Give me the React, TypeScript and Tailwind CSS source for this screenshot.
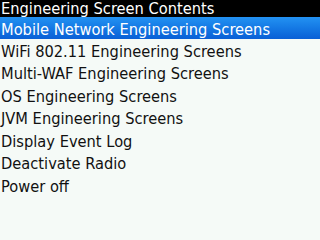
const items = [
  "Mobile Network Engineering Screens",
  "WiFi 802.11 Engineering Screens",
  "Multi-WAF Engineering Screens",
  "OS Engineering Screens",
  "JVM Engineering Screens",
  "Display Event Log",
  "Deactivate Radio",
  "Power off",
];

export default function App() {
  return (
    <div
      className="w-[320px] h-[240px] overflow-hidden bg-[#f5faf7] text-[16.3px]"
      style={{ fontFamily: '"DejaVu Sans Condensed", "DejaVu Sans", sans-serif' }}
    >
      {/* Title bar */}
      <div className="h-[17px] bg-black text-white leading-[18px] pl-[1px] whitespace-nowrap">
        Engineering Screen Contents
      </div>

      {/* Menu list */}
      <ul>
        {items.map((item, index) => (
          <li
            key={index}
            className={
              index === 0
                ? "h-[22px] pt-[2.5px] leading-[19px] pl-[1px] whitespace-nowrap text-white bg-gradient-to-b from-[#2392f2] to-[#0a5fd6]"
                : "h-[22.6px] pt-[2.5px] leading-[19px] pl-[1px] whitespace-nowrap text-[#111]"
            }
          >
            {item}
          </li>
        ))}
      </ul>
    </div>
  );
}
